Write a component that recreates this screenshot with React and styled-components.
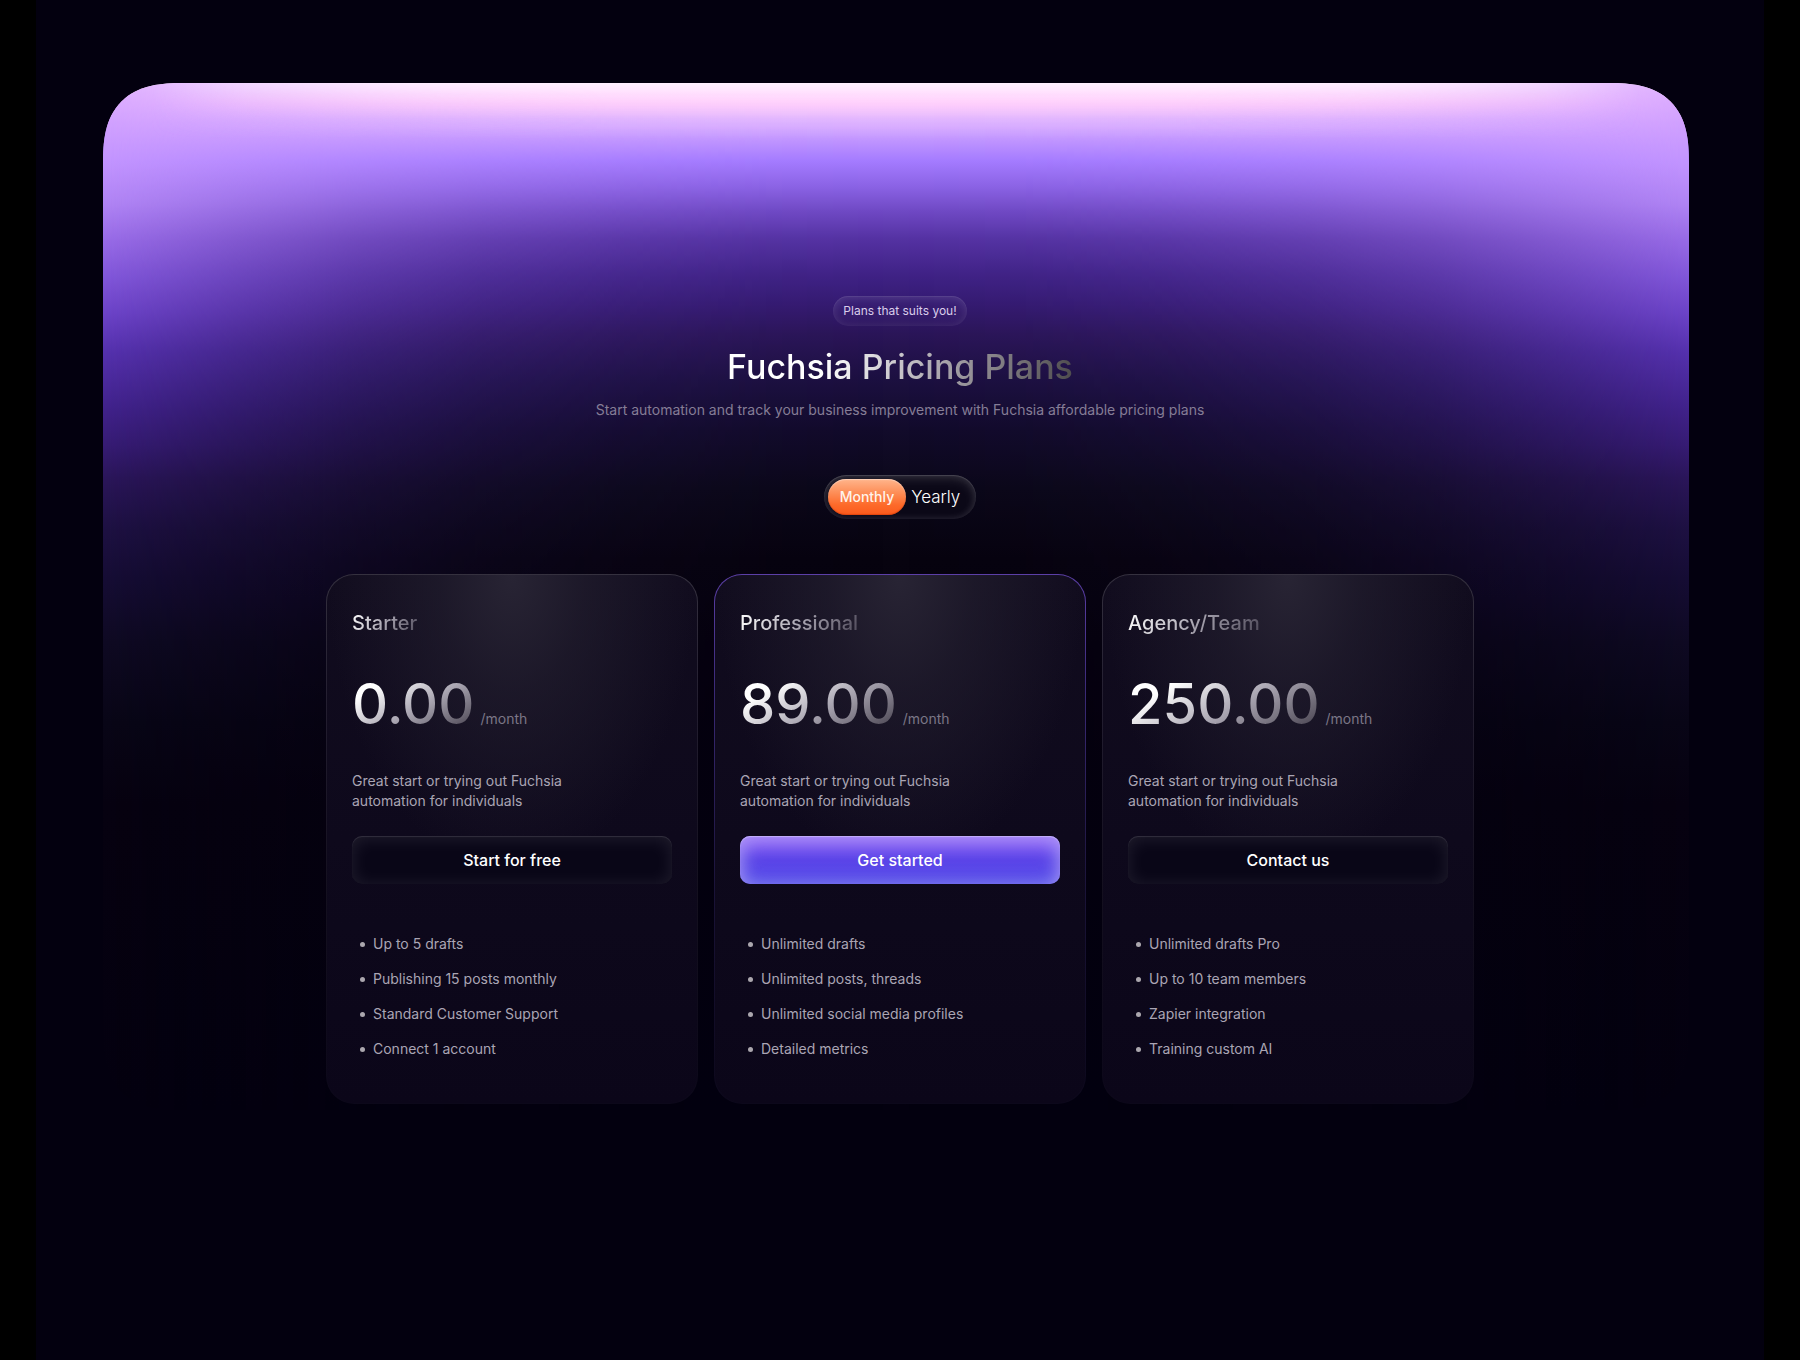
import React, { useState } from "react";
import styled, { createGlobalStyle, css } from "styled-components";

const GlobalStyle = createGlobalStyle`
  *, *::before, *::after { box-sizing: border-box; }
  body {
    margin: 0;
    background: #000;
    color: #fff;
    font-family: Inter, "Liberation Sans", sans-serif;
    -webkit-font-smoothing: antialiased;
  }
`;

const Page = styled.main`
  min-height: 100vh;
  margin: 0 36px;
  padding: 83px 75px 83px 67px;
  background: #03000f;
`;

const Panel = styled.section`
  position: relative;
  isolation: isolate;
  overflow: hidden;
  display: flex;
  flex-direction: column;
  align-items: center;
  padding: 213px 0 6px 8px;
  border-radius: 60px;
  @supports (corner-shape: superellipse(1.4)) {
    border-radius: 80px;
    corner-shape: superellipse(1.4);
  }
`;

const Glow = styled.div`
  position: absolute;
  inset: 0;
  z-index: -3;
  background: linear-gradient(
    180deg,
    #fff4ff 0px,
    #ffd2fc 18px,
    #dfb4ff 38px,
    #bf94ff 58px,
    #a47bff 78px,
    #8a62e4 104px,
    #6f49c4 128px,
    #5432a2 156px,
    #3f2285 192px,
    #341a70 222px,
    #2a1557 252px,
    #1c1040 296px,
    #120b2b 346px,
    #0b0819 406px,
    #07030f 476px,
    #05010e 560px,
    #03000f 100%
  );
`;

const SideGlow = styled.div`
  position: absolute;
  inset: 0;
  z-index: -2;
  background: linear-gradient(
    180deg,
    #e0b0ff 0px,
    #d0a0ff 40px,
    #c294ff 78px,
    #b084f4 120px,
    #976ae6 158px,
    #8257da 192px,
    #6c43c8 230px,
    #5531ae 268px,
    #41228c 324px,
    #361b74 362px,
    #2a1559 396px,
    #1d1042 446px,
    #150c34 496px,
    #0e0922 560px,
    #080516 640px,
    #060110 720px,
    #03000f 100%
  );
  mask-image: linear-gradient(
    90deg,
    #000 0%,
    rgba(0, 0, 0, 0.7) 8%,
    rgba(0, 0, 0, 0.43) 16%,
    rgba(0, 0, 0, 0.24) 24%,
    rgba(0, 0, 0, 0.1) 33%,
    rgba(0, 0, 0, 0.02) 42%,
    transparent 50%,
    rgba(0, 0, 0, 0.02) 58%,
    rgba(0, 0, 0, 0.1) 67%,
    rgba(0, 0, 0, 0.24) 76%,
    rgba(0, 0, 0, 0.43) 84%,
    rgba(0, 0, 0, 0.7) 92%,
    #000 100%
  );
`;

const TopHighlight = styled.div`
  position: absolute;
  inset: 0;
  z-index: -1;
  background: linear-gradient(
    180deg,
    #fff0ff 0px,
    rgba(255, 220, 253, 0.85) 12px,
    rgba(255, 206, 251, 0.6) 22px,
    rgba(226, 184, 255, 0.3) 36px,
    rgba(200, 160, 255, 0) 56px
  );
  mask-image: linear-gradient(
    90deg,
    transparent 3%,
    rgba(0, 0, 0, 0.4) 9%,
    rgba(0, 0, 0, 0.8) 20%,
    #000 32%,
    #000 68%,
    rgba(0, 0, 0, 0.8) 80%,
    rgba(0, 0, 0, 0.4) 91%,
    transparent 97%
  );
`;

const Header = styled.header`
  display: flex;
  flex-direction: column;
  align-items: center;
  text-align: center;
`;

const Tagline = styled.p`
  margin: 0 0 19px;
  padding: 0 10px;
  border-radius: 15px;
  font-size: 12px;
  line-height: 30px;
  color: #d9cdea;
  background: rgba(255, 255, 255, 0.02);
  box-shadow:
    inset 0 1px 1px rgba(255, 255, 255, 0.08),
    inset 0 2px 10px rgba(255, 255, 255, 0.13);
`;

const Title = styled.h1`
  margin: 0 0 11px;
  font-size: 34px;
  font-weight: 500;
  line-height: 44px;
  color: transparent;
  background: linear-gradient(100deg, #fff 28%, #a9a5ac 62%, #4c4a4c 100%);
  background-clip: text;
  -webkit-background-clip: text;
`;

const Subtitle = styled.p`
  margin: 0;
  font-size: 14px;
  line-height: 20px;
  color: #857d96;
`;

const Toggle = styled.fieldset`
  display: flex;
  align-items: center;
  margin: 55px 0;
  padding: 4px;
  border: 0;
  border-radius: 22px;
  background: #0b0817;
  box-shadow:
    inset 0 1px 1px rgba(255, 255, 255, 0.14),
    inset 0 4px 12px rgba(255, 255, 255, 0.12),
    inset 0 0 8px rgba(255, 255, 255, 0.1);
`;

const ToggleInput = styled.input`
  position: absolute;
  width: 1px;
  height: 1px;
  margin: 0;
  opacity: 0;
`;

const ToggleLabel = styled.label`
  padding: 0 12px 0 5px;
  border-radius: 18px;
  font-size: 17px;
  font-weight: 300;
  line-height: 36px;
  cursor: pointer;
  ${({ $active }) =>
    $active &&
    css`
      padding: 0 12px;
      font-size: 14px;
      font-weight: 500;
      color: #fff3ea;
      background: linear-gradient(180deg, #ffb58c 0%, #fd8c55 40%, #fd6a2a 72%, #fb5a1c 100%);
      box-shadow:
        inset 0 1px 1px rgba(255, 255, 255, 0.4),
        inset 0 -1px 1px rgba(200, 50, 0, 0.5);
    `}
`;

const Plans = styled.div`
  display: grid;
  grid-template-columns: repeat(3, minmax(0, 1fr));
  gap: 16px;
  width: 100%;
  max-width: 1148px;
`;

const Card = styled.article`
  display: flex;
  flex-direction: column;
  padding: 36px 25px 44px;
  border: 1px solid transparent;
  border-radius: 28px;
  background:
    radial-gradient(ellipse 50% 56% at 50% 0%, #282434 0%, rgba(36, 32, 48, 0.6) 40%, rgba(24, 18, 34, 0) 100%) padding-box,
    linear-gradient(180deg, #110c1e 0%, #0e091c 50%, #0b0619 100%) padding-box,
    ${({ $featured }) =>
      $featured
        ? "linear-gradient(180deg, #5c3fa8 0%, #3b2a78 22%, #1a1338 60%, #0c081b 100%)"
        : "linear-gradient(180deg, #35313f 0%, #231e30 25%, #14101f 60%, #0c081a 100%)"}
      border-box;
`;

const PlanName = styled.h2`
  align-self: flex-start;
  margin: 0 0 41px;
  font-size: 20px;
  font-weight: 500;
  line-height: 24px;
  color: transparent;
  background: linear-gradient(120deg, #fff 0%, #aaa6b2 50%, #4f4a5a 100%);
  background-clip: text;
  -webkit-background-clip: text;
`;

const PriceRow = styled.p`
  display: flex;
  align-items: baseline;
  gap: 6px;
  margin: 0 0 39px;
  line-height: 56px;
`;

const Price = styled.span`
  font-size: 56px;
  font-weight: 500;
  color: transparent;
  background: linear-gradient(150deg, #fff 20%, #aaa6b2 55%, #57525f 90%);
  background-clip: text;
  -webkit-background-clip: text;
`;

const Period = styled.span`
  font-size: 14px;
  line-height: 20px;
  color: #7b7686;
`;

const Description = styled.p`
  max-width: 240px;
  margin: 0 0 25px;
  font-size: 14px;
  line-height: 20px;
  color: #aaa5b4;
`;

const Action = styled.button`
  height: 48px;
  margin: 0 0 50px;
  border: 0;
  border-radius: 10px;
  font-family: inherit;
  font-size: 16px;
  font-weight: 500;
  color: #fff;
  cursor: pointer;
  background: #090617;
  box-shadow:
    inset 0 1px 1px rgba(255, 255, 255, 0.12),
    inset 0 2px 18px rgba(255, 255, 255, 0.1);
  ${({ $featured }) =>
    $featured &&
    css`
      background: linear-gradient(180deg, #7c50f4 0%, #5b45e8 50%, #5547ea 100%);
      box-shadow:
        inset 0 1px 1px rgba(255, 255, 255, 0.35),
        inset 0 8px 18px rgba(206, 164, 255, 0.6),
        inset 0 0 20px rgba(130, 150, 235, 0.75);
    `}
`;

const Features = styled.ul`
  display: flex;
  flex-direction: column;
  gap: 15px;
  margin: 0;
  padding: 0 0 0 8px;
  list-style: none;
`;

const Feature = styled.li`
  display: flex;
  align-items: center;
  gap: 8px;
  font-size: 14px;
  line-height: 20px;
  color: #aaa5b4;
  &::before {
    content: "";
    width: 5px;
    height: 5px;
    border-radius: 50%;
    background: #aba7ae;
  }
`;

const PERIODS = ["Monthly", "Yearly"];

const PLANS = [
  {
    name: "Starter",
    price: "0.00",
    action: "Start for free",
    features: ["Up to 5 drafts", "Publishing 15 posts monthly", "Standard Customer Support", "Connect 1 account"],
  },
  {
    name: "Professional",
    price: "89.00",
    action: "Get started",
    featured: true,
    features: ["Unlimited drafts", "Unlimited posts, threads", "Unlimited social media profiles", "Detailed metrics"],
  },
  {
    name: "Agency/Team",
    price: "250.00",
    action: "Contact us",
    features: ["Unlimited drafts Pro", "Up to 10 team members", "Zapier integration", "Training custom AI"],
  },
];

function PlanCard({ plan }) {
  return (
    <Card $featured={plan.featured}>
      <PlanName>{plan.name}</PlanName>
      <PriceRow>
        <Price>{plan.price}</Price>
        <Period>/month</Period>
      </PriceRow>
      <Description>Great start or trying out Fuchsia automation for individuals</Description>
      <Action type="button" $featured={plan.featured}>
        {plan.action}
      </Action>
      <Features>
        {plan.features.map((feature) => (
          <Feature key={feature}>{feature}</Feature>
        ))}
      </Features>
    </Card>
  );
}

export default function App() {
  const [period, setPeriod] = useState("Monthly");
  return (
    <>
      <GlobalStyle />
      <Page>
        <Panel>
          <Glow />
          <SideGlow />
          <TopHighlight />
          <Header>
            <Tagline>Plans that suits you!</Tagline>
            <Title>Fuchsia Pricing Plans</Title>
            <Subtitle>Start automation and track your business improvement with Fuchsia affordable pricing plans</Subtitle>
          </Header>
          <Toggle aria-label="Billing period">
            {PERIODS.map((name) => (
              <React.Fragment key={name}>
                <ToggleInput
                  type="radio"
                  name="period"
                  id={`period-${name}`}
                  checked={period === name}
                  onChange={() => setPeriod(name)}
                />
                <ToggleLabel htmlFor={`period-${name}`} $active={period === name}>
                  {name}
                </ToggleLabel>
              </React.Fragment>
            ))}
          </Toggle>
          <Plans>
            {PLANS.map((plan) => (
              <PlanCard key={plan.name} plan={plan} />
            ))}
          </Plans>
        </Panel>
      </Page>
    </>
  );
}
